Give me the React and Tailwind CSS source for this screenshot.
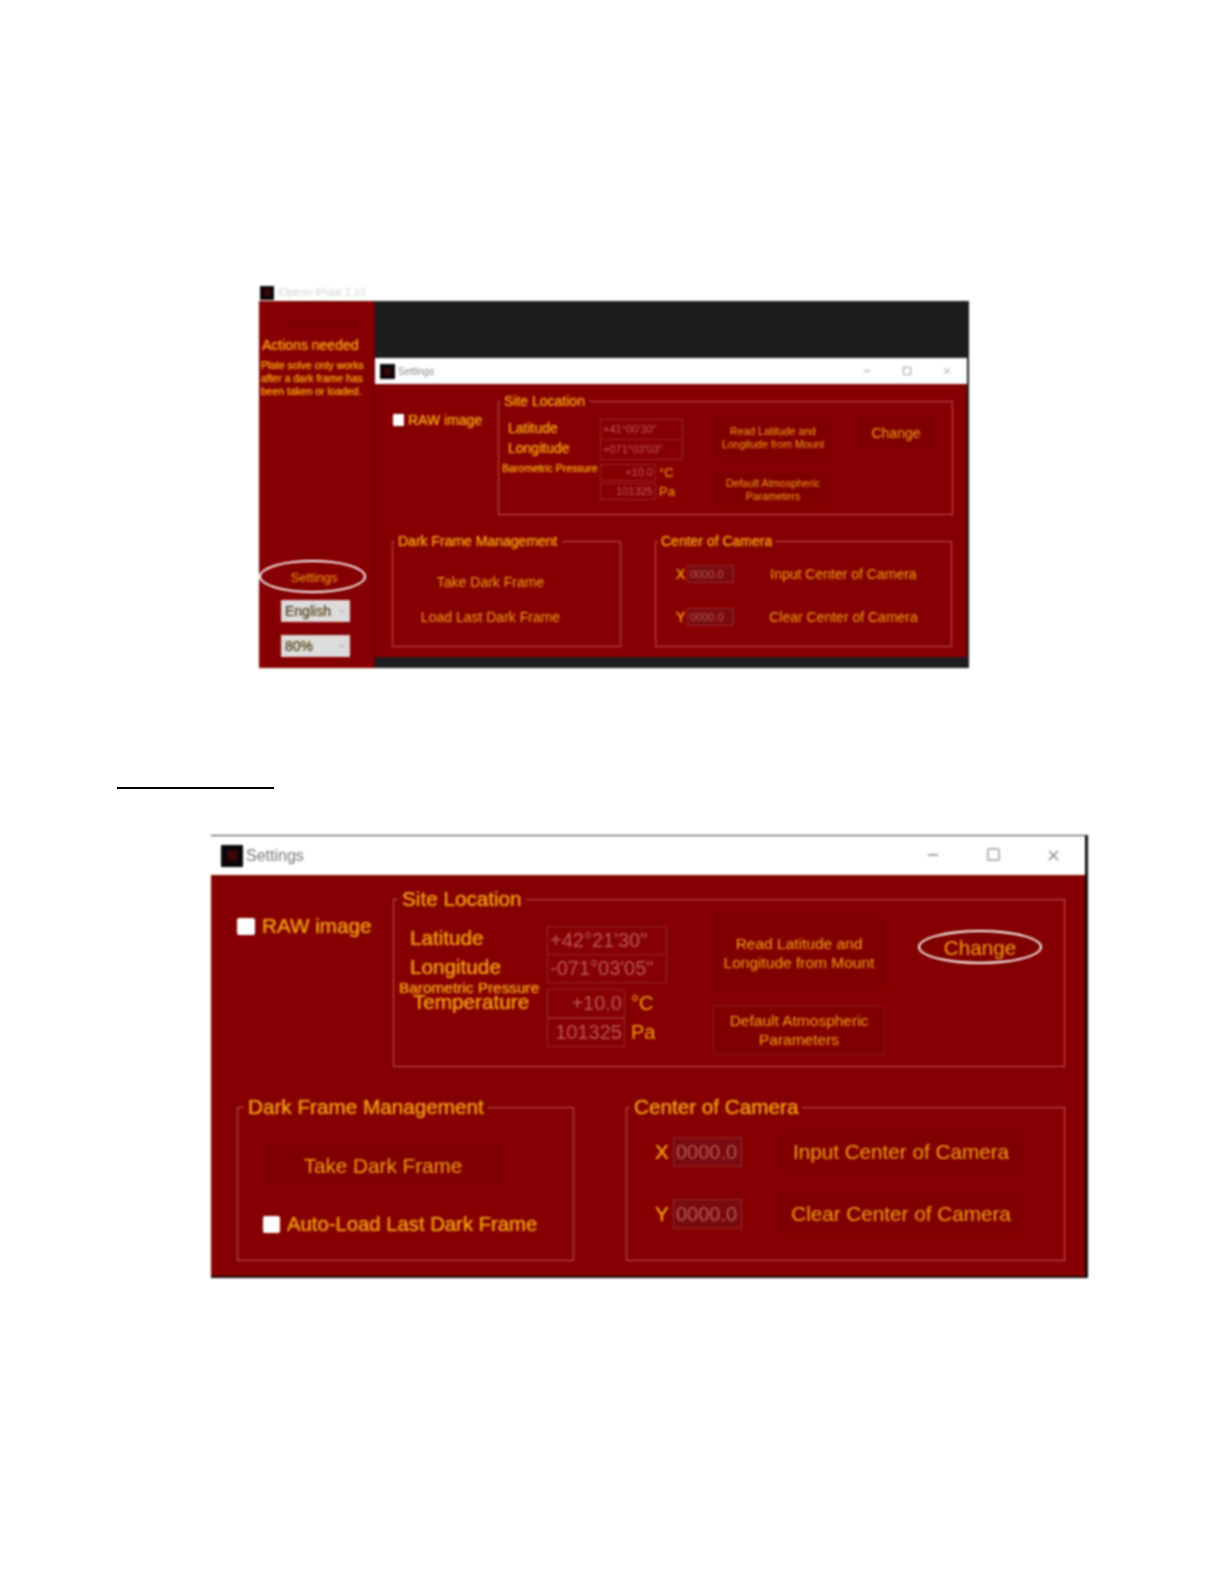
import React from "react";
import { ChevronDown, Minus, Square, X } from "lucide-react";

const AppIcon = ({ className }) => (
  <div className={`flex items-center justify-center bg-[#0c0508] ${className}`}>
    <div className="h-1/2 w-1/2 rounded-sm bg-[#3a0508]" />
  </div>
);

const SelectBox = ({ label }) => (
  <div className="flex h-[22px] w-[69px] items-center justify-between border border-[#e8d0d0] bg-[#dcdcdc] pl-[3px] pr-[2px] text-[14px] text-[#333]">
    <span>{label}</span>
    <ChevronDown size={10} className="text-[#999]" />
  </div>
);

const SmallSettings = () => (
  <div className="h-[299px] w-[594px] border-r-2 border-[#1e1e1e]">
    <div className="flex h-[26px] items-center bg-white pl-[5px] text-[#888]">
      <AppIcon className="h-[15px] w-[15px]" />
      <span className="ml-[3px] text-[10px]">Settings</span>
      <div className="ml-auto flex">
        <div className="flex w-[40px] justify-center"><Minus size={10} /></div>
        <div className="flex w-[40px] justify-center"><Square size={10} /></div>
        <div className="flex w-[40px] justify-center"><X size={10} /></div>
      </div>
    </div>
    <div className="h-[273px] bg-[#850000] pt-[9px] text-[14px] text-[#f0a010] [text-shadow:0_0_1px_#f0a010]">
      <div className="flex">
        <label className="mt-[21px] flex h-[12px] w-[123px] items-center pl-[18px]">
          <span className="h-[12px] w-[11px] rounded-[1px] bg-white" />
          <span className="ml-[4px] whitespace-nowrap">RAW image</span>
        </label>
        <fieldset className="h-[122px] w-[455px] border border-[#c25050]">
          <legend className="ml-[1px] px-[4px] leading-[16px]">Site Location</legend>
          <div className="flex">
            <div className="mt-[9px] w-[101px] pl-[9px]">
              <div className="h-[20px] leading-[20px]">Latitude</div>
              <div className="h-[20px] leading-[20px]">Longitude</div>
              <div className="-ml-[6px] whitespace-nowrap text-[10.5px] leading-[20px]">Barometric Pressure</div>
            </div>
            <div className="mt-[10px] w-[83px] text-[11px] text-[#b85a50] [text-shadow:none]">
              <div className="h-[21px] border border-[#96282a] px-[2px] leading-[19px]">+41°00'30"</div>
              <div className="-mt-px h-[21px] border border-[#96282a] px-[2px] leading-[19px]">+071°03'03"</div>
              <div className="mt-[3px] flex items-center">
                <div className="h-[17px] w-[56px] border border-[#96282a] px-[2px] text-right leading-[15px]">+10.0</div>
                <span className="ml-[3px] text-[13px] text-[#f0a010]">°C</span>
              </div>
              <div className="-mt-px flex items-center">
                <div className="h-[17px] w-[56px] border border-[#96282a] px-[2px] text-right leading-[15px]">101325</div>
                <span className="ml-[3px] text-[13px] text-[#f0a010]">Pa</span>
              </div>
            </div>
            <div className="ml-[32px] w-[116px] text-center text-[10.5px] leading-[13px]">
              <button className="mt-[6px] h-[45px] w-full bg-[#800000]">Read Latitude and Longitude from Mount</button>
              <button className="mt-[13px] h-[34px] w-full bg-[#800000]">Default Atmospheric Parameters</button>
            </div>
            <button className="ml-[25px] mt-[11px] h-[26px] w-[80px] bg-[#800000]">Change</button>
          </div>
        </fieldset>
      </div>
      <div className="mt-[18px] flex pl-[17px]">
        <fieldset className="h-[114px] w-[229px] border border-[#c25050]">
          <legend className="ml-[1px] px-[4px] leading-[16px]">Dark Frame Management</legend>
          <button className="ml-[15px] mt-[20px] block h-[26px] w-[165px]">Take Dark Frame</button>
          <button className="ml-[15px] mt-[9px] block h-[26px] w-[165px]">Load Last Dark Frame</button>
        </fieldset>
        <fieldset className="ml-[34px] h-[114px] w-[297px] border border-[#c25050]">
          <legend className="ml-px px-[4px] leading-[16px]">Center of Camera</legend>
          <div className="ml-[20px] mt-[15px] flex h-[20px] items-center">
            <span className="w-[11px]">X</span>
            <div className="h-[18px] w-[47px] border border-[#96282a] bg-[#780a10] px-[2px] text-[11px] leading-[16px] text-[#b85a50] [text-shadow:none]">0000.0</div>
            <button className="ml-[27px] h-[26px] w-[165px]">Input Center of Camera</button>
          </div>
          <div className="ml-[20px] mt-[23px] flex h-[20px] items-center">
            <span className="w-[11px]">Y</span>
            <div className="h-[18px] w-[47px] border border-[#96282a] bg-[#780a10] px-[2px] text-[11px] leading-[16px] text-[#b85a50] [text-shadow:none]">0000.0</div>
            <button className="ml-[27px] h-[26px] w-[165px]">Clear Center of Camera</button>
          </div>
        </fieldset>
      </div>
    </div>
  </div>
);

const MainWindow = () => (
  <div className="ml-[259px] w-[710px] blur-[0.8px]">
    <div className="flex h-[17px] items-center bg-white text-[10.5px] text-[#d4d4d4]">
      <AppIcon className="ml-px h-[14px] w-[14px]" />
      <span className="ml-[4px]">iOptron iPolar 2.10</span>
    </div>
    <div className="flex h-[367px]">
      <div className="flex w-[116px] flex-col border-r-2 border-[#780000] bg-[#850000] text-[#f0a010] [text-shadow:0_0_1px_#f0a010]">
        <div className="mt-[14px] pl-[28px] text-[11px] text-[#6c0404] [text-shadow:none]">Not connected</div>
        <div className="mt-[5px] whitespace-nowrap pl-[3px] text-[14px] leading-[16px]">Actions needed</div>
        <div className="mt-[6px] whitespace-nowrap pl-[2px] text-[10.4px] leading-[13px]">
          <div>Plate solve only works</div>
          <div>after a dark frame has</div>
          <div>been taken or loaded.</div>
        </div>
        <div className="mt-auto flex flex-col items-start pb-[11px]">
          <button className="flex h-[33px] w-[107px] items-center justify-center rounded-[50%] border-2 border-white pl-[3px] pt-[3px] text-[13px]">Settings</button>
          <div className="ml-[22px] mt-[7px]"><SelectBox label="English" /></div>
          <div className="ml-[22px] mt-[13px]"><SelectBox label="80%" /></div>
        </div>
      </div>
      <div className="bg-[#1e1e1e] pt-[57px]">
        <SmallSettings />
        <div className="h-[11px]" />
      </div>
    </div>
  </div>
);

const SettingsWindow = () => (
  <div className="ml-[211px] mt-[46px] w-[877px] border-r-[3px] border-b-[2px] border-[#180808] blur-[0.8px]">
    <div className="flex h-[40px] items-center border-t border-[#333] bg-white pl-[10px] text-[#777]">
      <AppIcon className="h-[22px] w-[22px]" />
      <span className="ml-[3px] text-[16px]">Settings</span>
      <div className="ml-auto flex pr-[2px] text-[#888]">
        <div className="flex w-[60px] justify-center"><Minus size={16} /></div>
        <div className="flex w-[60px] justify-center"><Square size={15} /></div>
        <div className="flex w-[60px] justify-center"><X size={17} /></div>
      </div>
    </div>
    <div className="h-[401px] bg-[#850000] pt-[12px] text-[20.7px] text-[#f0a010] [text-shadow:0_0_1px_#f0a010]">
      <div className="flex">
        <label className="mt-[27px] flex h-[24px] w-[182px] items-center pl-[26px]">
          <span className="h-[17px] w-[18px] rounded-[2px] bg-white" />
          <span className="ml-[7px] whitespace-nowrap">RAW image</span>
        </label>
        <fieldset className="h-[180px] w-[672px] border border-[#c25050]">
          <legend className="ml-[4px] px-[4px] leading-[24px]">Site Location</legend>
          <div className="flex">
            <div className="mt-[13px] w-[153px] pl-[16px]">
              <div className="h-[29px] leading-[28px]">Latitude</div>
              <div className="h-[30px] leading-[28px]">Longitude</div>
              <div className="-ml-[11px] h-[10px] whitespace-nowrap text-[15.4px] leading-[10px]">Barometric Pressure</div>
              <div className="ml-[3px] h-[20px] leading-[18px]">Temperature</div>
            </div>
            <div className="mt-[15px] w-[120px] text-[20px] text-[#b85a50] [text-shadow:none]">
              <div className="h-[29px] border border-[#96282a] px-[2px] leading-[27px]">+42°21'30"</div>
              <div className="-mt-px h-[29px] border border-[#96282a] px-[2px] leading-[27px]">-071°03'05"</div>
              <div className="mt-[5px] flex items-center">
                <div className="h-[29px] w-[78px] border border-[#96282a] px-[2px] text-right leading-[27px]">+10.0</div>
                <span className="ml-[6px] text-[#f0a010]">°C</span>
              </div>
              <div className="-mt-px flex items-center">
                <div className="h-[29px] w-[78px] border border-[#96282a] px-[2px] text-right leading-[27px]">101325</div>
                <span className="ml-[6px] text-[#f0a010]">Pa</span>
              </div>
            </div>
            <div className="ml-[46px] w-[172px] text-center text-[15.5px] leading-[19px]">
              <button className="mt-[5px] h-[73px] w-full bg-[#800000]">Read Latitude and<br />Longitude from Mount</button>
              <button className="mt-[16px] h-[50px] w-full border border-[#8e1414] bg-[#800000]">Default Atmospheric<br />Parameters</button>
            </div>
            <button className="ml-[33px] mt-[19px] h-[34px] w-[124px] rounded-[50%] border-2 border-white bg-[#800000]">Change</button>
          </div>
        </fieldset>
      </div>
      <div className="mt-[28px] flex pl-[26px]">
        <fieldset className="h-[166px] w-[337px] border border-[#c25050]">
          <legend className="ml-[6px] px-[4px] leading-[24px]">Dark Frame Management</legend>
          <button className="ml-[25px] mt-[29px] block h-[35px] w-[240px] bg-[#800000]">Take Dark Frame</button>
          <label className="ml-[25px] mt-[29px] flex h-[24px] items-center">
            <span className="h-[17px] w-[17px] rounded-[2px] bg-white" />
            <span className="ml-[7px] whitespace-nowrap text-[20.3px]">Auto-Load Last Dark Frame</span>
          </label>
        </fieldset>
        <fieldset className="ml-[52px] h-[166px] w-[439px] border border-[#c25050]">
          <legend className="ml-[3px] px-[4px] leading-[24px]">Center of Camera</legend>
          <div className="ml-[28px] mt-[18px] flex h-[30px] items-center">
            <span className="w-[18px]">X</span>
            <div className="h-[30px] w-[69px] border border-[#96282a] bg-[#780a10] px-[2px] text-[20px] leading-[28px] text-[#b85a50] [text-shadow:none]">0000.0</div>
            <button className="ml-[37px] h-[40px] w-[244px] bg-[#800000]">Input Center of Camera</button>
          </div>
          <div className="ml-[28px] mt-[32px] flex h-[30px] items-center">
            <span className="w-[18px]">Y</span>
            <div className="h-[30px] w-[69px] border border-[#96282a] bg-[#780a10] px-[2px] text-[20px] leading-[28px] text-[#b85a50] [text-shadow:none]">0000.0</div>
            <button className="ml-[37px] h-[42px] w-[244px] bg-[#800000]">Clear Center of Camera</button>
          </div>
        </fieldset>
      </div>
    </div>
  </div>
);

const App = () => {
  return (
    <div className="h-[1584px] overflow-hidden bg-white pt-[284px] font-['Liberation_Sans',Arial,sans-serif]">
      <MainWindow />
      <div className="ml-[117px] mt-[119px] h-[2px] w-[157px] bg-black" />
      <SettingsWindow />
    </div>
  );
};

export default App;
